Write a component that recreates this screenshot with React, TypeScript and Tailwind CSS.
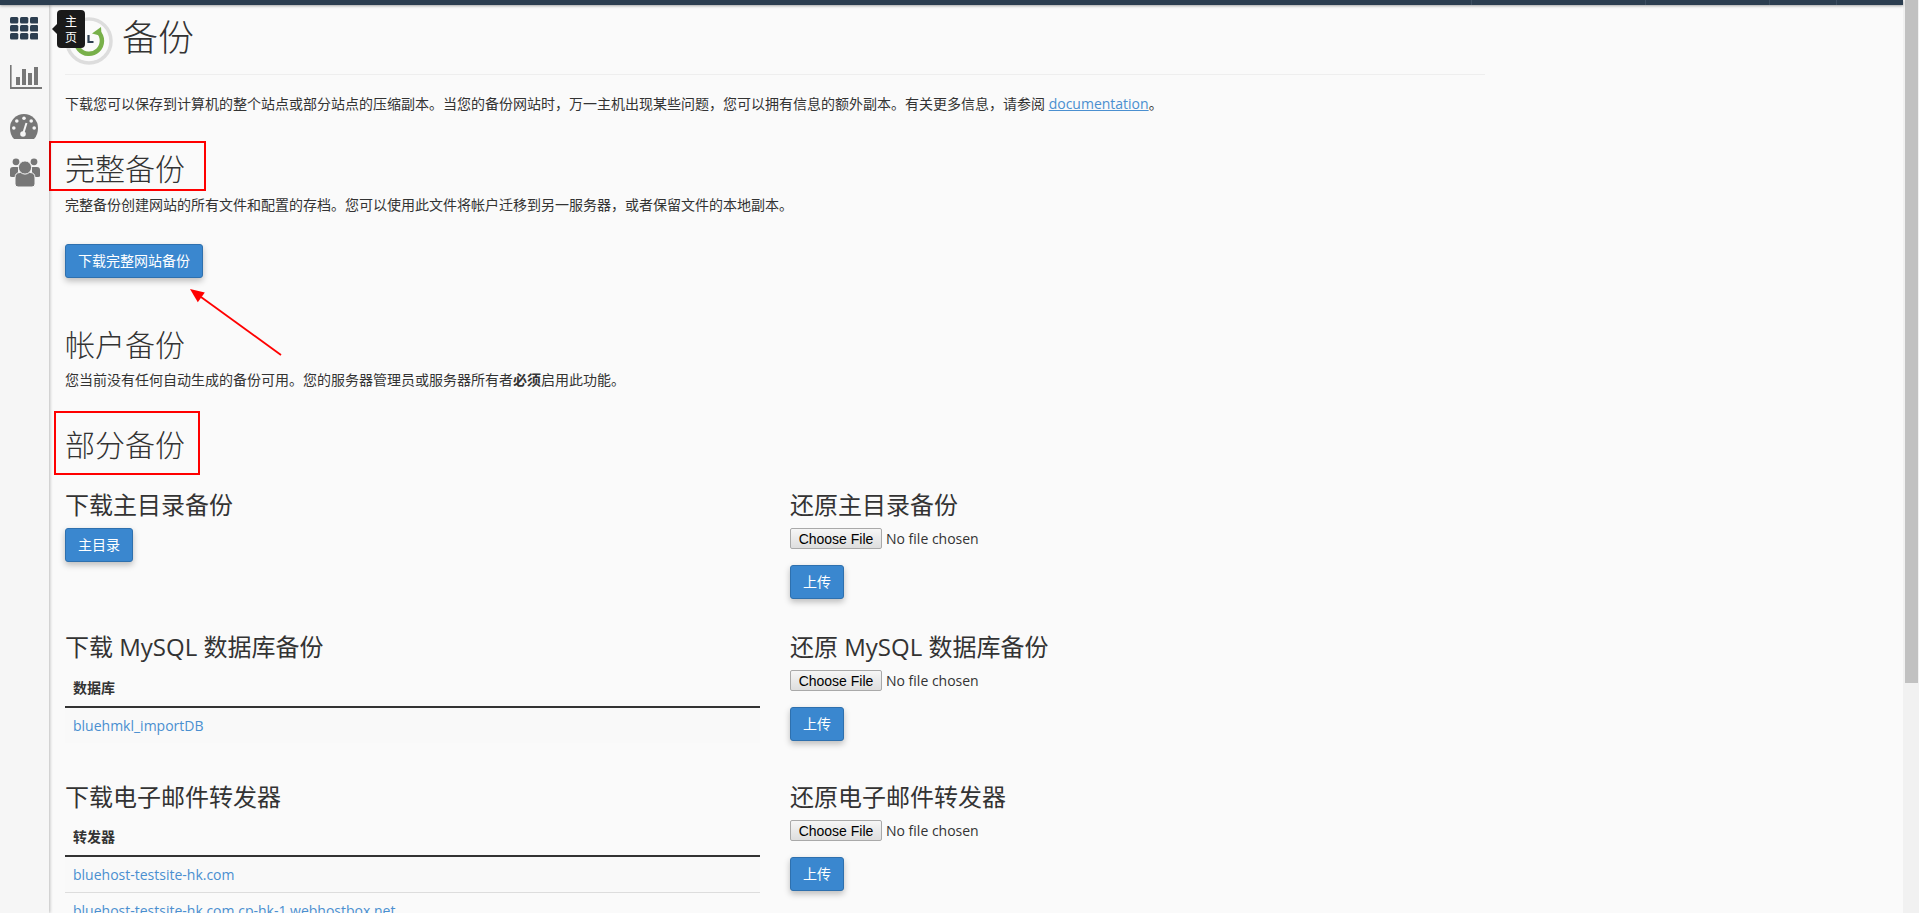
const font = "font-['Open_Sans','Noto_Sans_CJK_SC',sans-serif]";

function GridIcon() {
  const cells = [0, 10, 20].flatMap((x) => [0, 8, 16].map((y) => [x, y]));
  return (
    <svg width="28" height="23" viewBox="0 0 28 23" className="fill-[#2c3e50]">
      {cells.map(([x, y]) => (
        <rect key={`${x}-${y}`} x={x} y={y} width="8.3" height="6.6" rx="1.5" />
      ))}
    </svg>
  );
}

function ChartIcon() {
  return (
    <svg width="32" height="24" viewBox="0 0 32 24" className="fill-[#777777]">
      <rect x="0" y="0" width="1.6" height="24" />
      <rect x="0" y="22" width="32" height="2" />
      <rect x="6" y="12" width="4" height="8" />
      <rect x="12" y="4" width="4" height="16" />
      <rect x="18" y="8" width="4" height="12" />
      <rect x="24" y="2" width="4" height="18" />
    </svg>
  );
}

function GaugeIcon() {
  return (
    <svg width="28" height="25" viewBox="0 0 28 25">
      <path d="M4 25Q0 21 0 14A14 14 0 0 1 28 14Q28 21 24 25Z" fill="#777777" />
      <g fill="#f6f6f6">
        <circle cx="14" cy="4.2" r="1.8" />
        <circle cx="6.8" cy="7" r="1.8" />
        <circle cx="21.2" cy="7" r="1.8" />
        <circle cx="3.8" cy="14" r="1.8" />
        <circle cx="24.2" cy="14" r="1.8" />
        <circle cx="13" cy="20" r="2.8" />
      </g>
      <path d="M13 20L16.5 9" stroke="#f6f6f6" strokeWidth="2" />
    </svg>
  );
}

function UsersIcon() {
  return (
    <svg width="30" height="29" viewBox="0 0 30 29" fill="#777777">
      <circle cx="6" cy="3.8" r="3.4" />
      <circle cx="24" cy="3.8" r="3.4" />
      <path d="M0 18V12Q0 9 3 9H8V19H2Q0 19 0 18Z" />
      <path d="M30 18V12Q30 9 27 9H22V19H28Q30 19 30 18Z" />
      <path
        d="M5 26V20Q5 14.5 10 14.5H20Q25 14.5 25 20V26Q25 29 22 29H8Q5 29 5 26Z"
        stroke="#f6f6f6"
        strokeWidth="1"
      />
      <circle cx="15" cy="9.5" r="6.6" stroke="#f6f6f6" strokeWidth="1" />
    </svg>
  );
}

function BackupLogo() {
  return (
    <svg width="48" height="48" viewBox="0 0 48 48" fill="none">
      <circle cx="24" cy="24" r="22" stroke="#dddddd" strokeWidth="3.5" />
      <path d="M33 14.5A13 13 0 1 1 16 13.5" stroke="#78b04a" strokeWidth="4.5" />
      <path d="M27 16.5L36.5 19L36 10Z" fill="#78b04a" />
      <path d="M23.5 18V25H28.5" stroke="#2c3e50" strokeWidth="2.2" />
    </svg>
  );
}

function PrimaryButton({ label, className = '' }: { label: string; className?: string }) {
  return (
    <button
      className={`h-[34px] rounded-[3px] border border-[#2e70ae] bg-[#3a87cf] pb-[2px] text-[14px] font-normal text-white shadow-[0_3px_6px_rgba(0,0,0,0.25)] ${className}`}
    >
      {label}
    </button>
  );
}

function RestoreBlock({ title }: { title: string }) {
  return (
    <div className="mb-[33px]">
      <h3 className="text-[24px] leading-[30px]">{title}</h3>
      <input
        type="file"
        className="mt-[8px] block h-[21px] w-[300px] text-[14px] leading-[21px] file:mr-[4px] file:h-[21px] file:w-[92px] file:rounded-[2px] file:border file:border-[#a9a9a9] file:bg-linear-to-b file:from-[#f6f6f6] file:to-[#dedede] file:font-['Liberation_Sans',sans-serif] file:text-[14px] file:text-black"
      />
      <PrimaryButton label="上传" className="mt-[16px] block w-[54px]" />
    </div>
  );
}

function LinkTable({ heading, rows }: { heading: string; rows: string[] }) {
  return (
    <table className="w-full border-collapse text-[14px]">
      <thead>
        <tr className="border-b-2 border-[#333333]">
          <th className="h-[44px] px-[8px] pt-[6px] text-left font-bold">{heading}</th>
        </tr>
      </thead>
      <tbody>
        {rows.map((row) => (
          <tr key={row} className="border-b border-[#dddddd] last:border-b-0 even:bg-[#fafafa] odd:bg-[#f9f9f9]">
            <td className="h-[36px] px-[8px] text-[#4a8fd0]">{row}</td>
          </tr>
        ))}
      </tbody>
    </table>
  );
}

export default function App() {
  return (
    <div className={`relative flex h-[913px] overflow-hidden bg-[#fafafa] text-[#333333] ${font}`}>
      <div className="flex min-w-0 flex-1 flex-col">
        {/* top bar */}
        <div className="z-20 flex h-[5px] shrink-0 bg-[#2c3e50] shadow-[0_1px_3px_rgba(0,0,0,0.35)]">
          <div className="w-[1472px] border-r border-[#3d4f61]" />
          <div className="w-[174px] border-r border-[#3d4f61]" />
          <div className="w-[124px] border-r border-[#3d4f61]" />
          <div className="w-[67px] border-r border-[#3d4f61]" />
        </div>

        <div className="flex min-h-0 flex-1">
          {/* sidebar */}
          <div className="z-10 flex w-[49px] shrink-0 flex-col items-start bg-[#f6f6f6] pl-[10px] pt-[12px] shadow-[1px_0_3px_rgba(0,0,0,0.25)]">
            <GridIcon />
            <div className="mt-[25px]"><ChartIcon /></div>
            <div className="mt-[25px]"><GaugeIcon /></div>
            <div className="mt-[19px]"><UsersIcon /></div>
          </div>

          {/* content */}
          <div className="w-[1436px] shrink-0 pl-[16px]">
            <div className="flex h-[70px] items-start gap-[9px] border-b border-[#eeeeee]">
              <div className="mt-[12px]"><BackupLogo /></div>
              <h1 className="mt-[13px] text-[36px] font-light leading-[40px]">备份</h1>
            </div>
            <p className="mt-[19px] text-[14px] leading-[20px]">
              下载您可以保存到计算机的整个站点或部分站点的压缩副本。当您的备份网站时，万一主机出现某些问题，您可以拥有信息的额外副本。有关更多信息，请参阅{' '}
              <a className="text-[#4a8fd0] underline">documentation</a>。
            </p>

            <h2 className="mt-[37px] text-[30px] font-light leading-[36px]">完整备份</h2>
            <p className="mt-[8px] text-[14px] leading-[20px]">
              完整备份创建网站的所有文件和配置的存档。您可以使用此文件将帐户迁移到另一服务器，或者保留文件的本地副本。
            </p>
            <PrimaryButton label="下载完整网站备份" className="mt-[29px] block w-[138px]" />

            <h2 className="mt-[49px] text-[30px] font-light leading-[36px]">帐户备份</h2>
            <p className="mt-[7px] text-[14px] leading-[20px]">
              您当前没有任何自动生成的备份可用。您的服务器管理员或服务器所有者<b>必须</b>启用此功能。
            </p>

            <h2 className="mt-[37px] text-[30px] font-light leading-[36px]">部分备份</h2>

            <div className="mt-[27px] grid grid-cols-[695px_1fr] gap-x-[30px]">
              <div>
                <h3 className="text-[24px] leading-[30px]">下载主目录备份</h3>
                <PrimaryButton label="主目录" className="mt-[8px] block w-[68px]" />
              </div>
              <RestoreBlock title="还原主目录备份" />

              <div className="mb-[39px]">
                <h3 className="mb-[1px] text-[24px] leading-[30px]">下载 MySQL 数据库备份</h3>
                <LinkTable heading="数据库" rows={['bluehmkl_importDB']} />
              </div>
              <RestoreBlock title="还原 MySQL 数据库备份" />

              <div>
                <h3 className="text-[24px] leading-[30px]">下载电子邮件转发器</h3>
                <LinkTable
                  heading="转发器"
                  rows={['bluehost-testsite-hk.com', 'bluehost-testsite-hk.com.cp-hk-1.webhostbox.net']}
                />
              </div>
              <RestoreBlock title="还原电子邮件转发器" />
            </div>
          </div>
        </div>
      </div>

      {/* scrollbar */}
      <div className="w-[16px] shrink-0 bg-[#f1f1f1] pl-[2px] pr-[1px]">
        <div className="h-[683px] bg-[#c1c1c1]" />
      </div>

      {/* tooltip on the home icon */}
      <div className="absolute left-[57px] top-[10px] z-30 h-[38px] w-[28px] rounded-[4px] bg-[#1a1a1a] px-[8px] pt-[4px] text-[12px] leading-[16px] text-white">
        主页
        <div className="absolute left-[-5px] top-[14px] h-0 w-0 border-y-[5px] border-r-[5px] border-y-transparent border-r-[#1a1a1a]" />
      </div>

      {/* red annotations */}
      <div className="absolute left-[49px] top-[141px] h-[50px] w-[157px] border-2 border-[#ff0000]" />
      <div className="absolute left-[54px] top-[411px] h-[64px] w-[146px] border-2 border-[#ff0000]" />
      <svg className="absolute left-[180px] top-[280px]" width="110" height="85" viewBox="0 0 110 85">
        <path d="M21 17L101 75" stroke="#ff0000" strokeWidth="1.8" />
        <path d="M10 9L17.8 22.2L24.8 12.4Z" fill="#ff0000" />
      </svg>
    </div>
  );
}
